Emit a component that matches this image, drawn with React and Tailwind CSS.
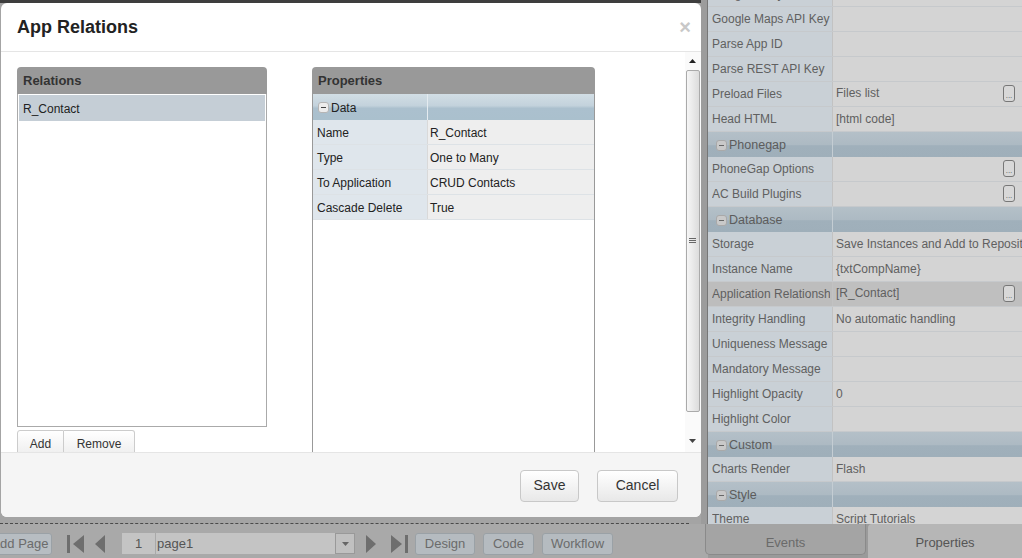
import React from "react";

const font = "font-['Liberation_Sans',Arial,sans-serif]";

const panelRows = [
  { label: "Google Analytics" },
  { label: "Google Maps API Key" },
  { label: "Parse App ID" },
  { label: "Parse REST API Key" },
  { label: "Preload Files", value: "Files list", btn: true },
  { label: "Head HTML", value: "[html code]" },
  { group: "Phonegap" },
  { label: "PhoneGap Options", btn: true },
  { label: "AC Build Plugins", btn: true },
  { group: "Database" },
  { label: "Storage", value: "Save Instances and Add to Repository" },
  { label: "Instance Name", value: "{txtCompName}" },
  { label: "Application Relationships", value: "[R_Contact]", btn: true, hl: true },
  { label: "Integrity Handling", value: "No automatic handling" },
  { label: "Uniqueness Message" },
  { label: "Mandatory Message" },
  { label: "Highlight Opacity", value: "0" },
  { label: "Highlight Color" },
  { group: "Custom" },
  { label: "Charts Render", value: "Flash" },
  { group: "Style" },
  { label: "Theme", value: "Script Tutorials" },
];

const relProps = [
  ["Name", "R_Contact"],
  ["Type", "One to Many"],
  ["To Application", "CRUD Contacts"],
  ["Cascade Delete", "True"],
];

function Minus({ dim }) {
  return (
    <span
      className={`w-[11px] h-[11px] rounded-[3px] flex items-center justify-center shrink-0 ${
        dim ? "bg-[#c9c9c9] border border-[#a9a9a9]" : "bg-[#ececec] border border-[#b5b5b5]"
      }`}
    >
      <span className={`w-[5px] h-[1px] ${dim ? "bg-[#666]" : "bg-[#444]"}`} />
    </span>
  );
}

function Ellipsis() {
  return (
    <span className="w-[12px] h-[17px] rounded-[3px] border border-[#777] bg-[#d8d8d8] flex items-end justify-center pb-[2px] mr-[7px] shrink-0">
      <span className="text-[8px] leading-[6px] text-[#555]">...</span>
    </span>
  );
}

function PanelHeader({ title }) {
  return (
    <div className="h-[27px] shrink-0 bg-[#999999] rounded-t-[4px] px-[6px] flex items-center text-[13px] font-bold text-[#333]">
      {title}
    </div>
  );
}

function Dialog() {
  return (
    <div className="h-[514px] w-[700px] ml-[1px] bg-white rounded-[6px] flex flex-col overflow-hidden shrink-0">
      <div className="h-[49px] border-b border-[#e5e5e5] pl-[16px] pr-[10px] flex items-center justify-between shrink-0">
        <h1 className="text-[18px] font-bold text-[#222]">App Relations</h1>
        <span className="text-[20px] font-bold text-[#c8c8c8] leading-none">×</span>
      </div>

      <div className="h-[400px] flex shrink-0">
        <div className="flex-1 overflow-hidden pl-[16px] pt-[15px] flex items-start gap-[45px]">
          <div className="w-[250px] flex flex-col shrink-0">
            <PanelHeader title="Relations" />
            <div className="h-[333px] shrink-0 border border-t-0 border-[#aaa] p-[1px]">
              <div className="h-[26px] bg-[#c5ced6] px-[4px] pt-[1px] flex items-center text-[12px] text-[#222]">
                R_Contact
              </div>
            </div>
            <div className="flex mt-[3px] shrink-0">
              <button className="w-[47px] h-[26px] border border-[#ccc] rounded-tl-[3px] bg-gradient-to-b from-white to-[#eeeeee] text-[12px] text-[#333] pt-[2px]">
                Add
              </button>
              <button className="w-[71px] h-[26px] border border-l-0 border-[#ccc] rounded-tr-[3px] bg-gradient-to-b from-white to-[#eeeeee] text-[12px] text-[#333] pt-[2px]">
                Remove
              </button>
            </div>
          </div>

          <div className="w-[283px] flex flex-col shrink-0">
            <PanelHeader title="Properties" />
            <div className="h-[400px] shrink-0 border-x border-[#999] text-[12px] text-[#222]">
              <div className="h-[26px] flex bg-[linear-gradient(#d2dee5_0%,#c3d2dc_45%,#abc0ce_55%,#aac0cd_100%)]">
                <div className="w-[114px] flex items-center gap-[2px] pl-[5px] pt-[1px]">
                  <Minus />
                  <span>Data</span>
                </div>
                <div className="flex-1 border-l border-[#e4ebf0]" />
              </div>
              {relProps.map(([k, v]) => (
                <div key={k} className="h-[25px] flex border-b border-[#dde2e6]">
                  <div className="w-[114px] bg-[#dfe6ec] pl-[4px] pt-[1px] flex items-center">{k}</div>
                  <div className="flex-1 bg-[#eeeeee] border-l border-[#d9d9d9] pl-[2px] pt-[1px] flex items-center">{v}</div>
                </div>
              ))}
            </div>
          </div>
        </div>

        <div className="w-[16px] flex flex-col items-center bg-[#fafafa] shrink-0 pr-[1px]">
          <div className="h-[18px] flex items-center justify-center">
            <svg width="7" height="4" viewBox="0 0 7 4"><path d="M0 4 L3.5 0 L7 4 Z" fill="#222" /></svg>
          </div>
          <div className="w-[14px] h-[342px] border border-[#aaa] rounded-[2px] bg-gradient-to-r from-[#f6f6f6] to-[#dcdcdc] flex items-center justify-center">
            <svg width="7" height="6" viewBox="0 0 7 6">
              <path d="M0 0.5 H7 M0 2.5 H7 M0 4.5 H7" stroke="#666" strokeWidth="1" />
            </svg>
          </div>
          <div className="flex-1" />
          <div className="h-[22px] flex items-center justify-center">
            <svg width="7" height="4" viewBox="0 0 7 4"><path d="M0 0 L3.5 4 L7 0 Z" fill="#444" /></svg>
          </div>
        </div>
      </div>

      <div className="flex-1 bg-[#f5f5f5] border-t border-[#e5e5e5] flex items-center justify-end gap-[18px] pr-[23px] pt-[1px]">
        <button className="w-[59px] h-[32px] rounded-[4px] border border-[#c8c8c8] bg-gradient-to-b from-white to-[#e8e8e8] text-[14px] text-[#333]">
          Save
        </button>
        <button className="w-[81px] h-[32px] rounded-[4px] border border-[#c8c8c8] bg-gradient-to-b from-white to-[#e8e8e8] text-[14px] text-[#333]">
          Cancel
        </button>
      </div>
    </div>
  );
}

function NavIcon({ kind }) {
  const fill = "#6e6e6e";
  if (kind === "first")
    return (
      <svg width="17" height="18" viewBox="0 0 17 18">
        <rect x="0" y="0" width="3" height="18" fill={fill} />
        <path d="M17 0 V18 L6 9 Z" fill={fill} />
      </svg>
    );
  if (kind === "prev")
    return (
      <svg width="10" height="18" viewBox="0 0 10 18"><path d="M10 0 V18 L0 9 Z" fill={fill} /></svg>
    );
  if (kind === "next")
    return (
      <svg width="10" height="18" viewBox="0 0 10 18"><path d="M0 0 V18 L10 9 Z" fill={fill} /></svg>
    );
  return (
    <svg width="17" height="18" viewBox="0 0 17 18">
      <path d="M0 0 V18 L11 9 Z" fill={fill} />
      <rect x="14" y="0" width="3" height="18" fill={fill} />
    </svg>
  );
}

function ToolButton({ children, w }) {
  return (
    <span className={`${w} h-[22px] rounded-[3px] border border-[#9aa1a6] bg-[#b5bbc0] text-[13px] text-[#6b6b6b] flex items-center justify-center shrink-0`}>
      {children}
    </span>
  );
}

function Toolbar() {
  return (
    <div className="h-[34px] w-[708px] bg-[#a9a9a9] flex items-center pt-[5px]">
      <span className="-ml-[12px] w-[64px] h-[22px] rounded-[3px] border border-[#9aa1a6] bg-[#b7bdc2] text-[13px] text-[#6b6b6b] flex items-center justify-center shrink-0">
        Add Page
      </span>
      <span className="ml-[15px] flex"><NavIcon kind="first" /></span>
      <span className="ml-[11px] flex"><NavIcon kind="prev" /></span>
      <span className="ml-[17px] w-[33px] h-[21px] bg-[#c4c4c4] text-[13px] text-[#555] flex items-center justify-center">1</span>
      <span className="ml-[1px] w-[179px] h-[21px] bg-[#c4c4c4] text-[13px] text-[#555] flex items-center pl-[1px]">page1</span>
      <span className="w-[20px] h-[21px] bg-[#c0c0c0] border border-[#999] flex items-center justify-center">
        <svg width="7" height="4" viewBox="0 0 7 4"><path d="M0 0 L3.5 4 L7 0 Z" fill="#666" /></svg>
      </span>
      <span className="ml-[11px] flex"><NavIcon kind="next" /></span>
      <span className="ml-[15px] flex"><NavIcon kind="last" /></span>
      <span className="ml-[7px] flex gap-[8px]">
        <ToolButton w="w-[60px]">Design</ToolButton>
        <ToolButton w="w-[51px]">Code</ToolButton>
        <ToolButton w="w-[71px]">Workflow</ToolButton>
      </span>
    </div>
  );
}

function RightPanel() {
  return (
    <div className="flex-1 h-[524px] overflow-hidden bg-[#d4d4d4] text-[12px] text-[#606060]">
      <div className="-mt-[18px]">
        {panelRows.map((r, i) =>
          r.group ? (
            <div key={i} className="h-[25px] flex bg-[linear-gradient(#b4c0c8_0%,#adbac3_50%,#a0b0bb_55%,#9fafba_100%)]">
              <div className="w-[124px] flex items-center gap-[2px] pl-[8px] pt-[1px] text-[#5c5c5c]">
                <Minus dim />
                <span className="text-[12.5px]">{r.group}</span>
              </div>
              <div className="flex-1 border-l border-[#c4cdd3]" />
            </div>
          ) : (
            <div key={i} className="h-[25px] flex border-b border-[#c6c9cc]">
              <div
                className={`w-[124px] shrink-0 pl-[4px] flex items-center overflow-hidden whitespace-nowrap ${
                  r.hl ? "bg-[#bdbdbd]" : "bg-[#c9d0d6]"
                }`}
              >
                <span className="block w-[118px] overflow-hidden">{r.label}</span>
              </div>
              <div
                className={`flex-1 border-l border-[#c2c2c2] pl-[3px] flex justify-between overflow-hidden whitespace-nowrap ${
                  r.hl ? "bg-[#bfbfbf]" : "bg-[#d4d4d4]"
                } ${r.btn ? "items-start pt-[2px]" : "items-center"}`}
              >
                <span>{r.value || ""}</span>
                {r.btn && (
                  <span className="pt-[1px]">
                    <Ellipsis />
                  </span>
                )}
              </div>
            </div>
          )
        )}
      </div>
    </div>
  );
}

export default function App() {
  return (
    <div className={`w-[1022px] h-[558px] flex flex-col overflow-hidden bg-[#8d8d8d] ${font}`}>
      <div className="h-[524px] flex shrink-0">
        <div className="w-[701px] flex flex-col shrink-0 bg-[#a4a4a4]">
          <div className="h-[3px] shrink-0 bg-[#3e3e3e]" />
          <Dialog />
          <div className="h-[7px] shrink-0 border-b border-dashed border-[#4a4a4a] mr-[12px]" />
        </div>
        <div className="w-[7px] shrink-0 bg-[#9c9c9c] border-r border-[#777]" />
        <RightPanel />
      </div>
      <div className="h-[34px] flex shrink-0">
        <Toolbar />
        <div className="flex-1 flex bg-[#9a9a9a]">
          <div className="w-[161px] h-[31px] -ml-[3px] bg-[#a4a4a4] border border-t-0 border-[#8a8a8a] rounded-b-[5px] text-[13px] text-[#6a6a6a] flex items-center justify-center pt-[7px]">
            Events
          </div>
          <div className="flex-1 ml-[2px] bg-[#b6b6b6] rounded-tl-[4px] text-[13px] text-[#555] flex items-center justify-center pt-[4px]">
            Properties
          </div>
        </div>
      </div>
    </div>
  );
}
